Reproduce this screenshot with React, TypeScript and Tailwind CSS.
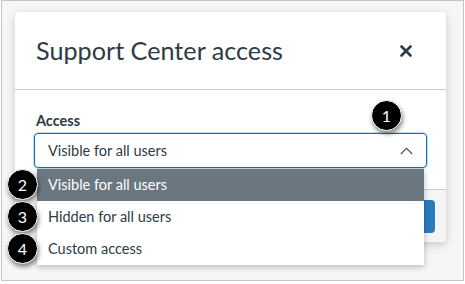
const options = ["Visible for all users", "Hidden for all users", "Custom access"]

function Callout({ n, className }: { n: number; className: string }) {
  return (
    <div
      className={`absolute flex h-[31px] w-[31px] items-center justify-center rounded-full border-[1.5px] border-white bg-black text-[16px] text-white shadow-[1px_3px_4px_rgba(0,0,0,0.45)] ${className}`}
    >
      {n}
    </div>
  )
}

export default function App() {
  return (
    <div className="relative h-[284px] w-[465px] overflow-hidden bg-white font-['Lato','Liberation_Sans',sans-serif] text-[#2d3b45]">
      <div className="ml-[1px] h-[281px] w-[463px] border border-[#c4c4c4] bg-[#f6f6f6] pl-[13px] pt-[11px]">
        <div className="relative w-[431px] rounded-[4px] bg-white shadow-[0_3px_10px_rgba(0,0,0,0.18)]">
          <div className="flex h-[78px] items-center justify-between border-b border-[#c7cdd1] pl-[21px] pr-[34px]">
            <h1 className="text-[25.2px] leading-none">Support Center access</h1>
            <svg width="12" height="12" viewBox="0 0 12 12">
              <path d="M1.5 1.5 L10.5 10.5 M10.5 1.5 L1.5 10.5" stroke="#2d3b45" strokeWidth="2.6" strokeLinecap="round" />
            </svg>
          </div>
          <div className="px-[19px] pb-[21px] pt-[21px]">
            <div className="pl-[2px] text-[14.5px] font-bold leading-[20px]">Access</div>
            <div className="mt-[2px] flex h-[35px] items-center justify-between rounded-[4px] border border-[#0374b5] pl-[13px] pr-[13px] shadow-[0_0_0_1px_rgba(3,116,181,0.25)]">
              <span className="text-[14.5px]">Visible for all users</span>
              <svg width="13" height="8" viewBox="0 0 13 8">
                <path d="M0.8 7 L6.5 1.3 L12.2 7" fill="none" stroke="#4a5660" strokeWidth="1.2" />
              </svg>
            </div>
          </div>
          <div className="flex h-[53px] items-center justify-end rounded-b-[4px] border-t border-[#c7cdd1] bg-[#f5f5f5] pr-[11px]">
            <button className="h-[33px] rounded-[4px] bg-[#2b7abc] px-4 text-[14px] text-white">Update</button>
          </div>
          <div className="absolute left-[22px] top-[157px] w-[387px] bg-white shadow-[0_2px_6px_rgba(0,0,0,0.25)]">
            {options.map((o, i) => (
              <div
                key={o}
                className={`flex h-[32px] items-center pl-[11px] text-[14.5px] ${i === 0 ? "bg-[#6b7780] text-white" : ""}`}
              >
                {o}
              </div>
            ))}
          </div>
        </div>
      </div>
      <Callout n={1} className="left-[371px] top-[100px]" />
      <Callout n={2} className="left-[7px] top-[169px]" />
      <Callout n={3} className="left-[7px] top-[201px]" />
      <Callout n={4} className="left-[7px] top-[233px]" />
    </div>
  )
}
